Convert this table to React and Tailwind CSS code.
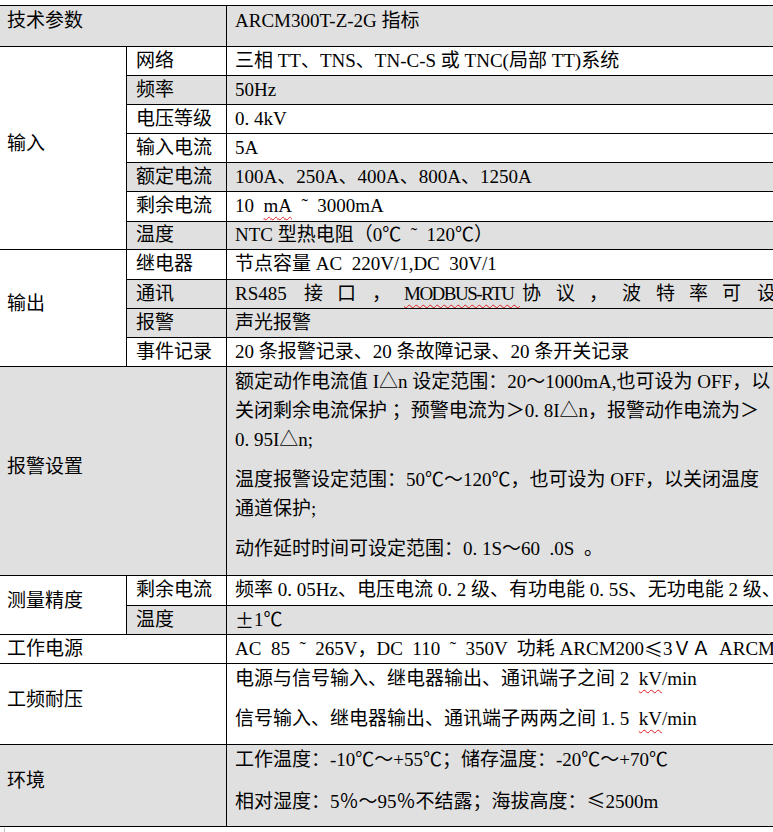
import React from 'react';

const G = 'bg-[#e0e0e0]';

// spell-check squiggle
const W = ({ children, className = '' }) => (
  <span className={`underline decoration-wavy decoration-[#e02020] decoration-1 underline-offset-[4px] ${className}`}>{children}</span>
);

// full-width symbols rendered by the CJK face
const C = ({ children }) => <span className="font-['Noto_Sans_CJK_SC',sans-serif]">{children}</span>;

const Cell = ({ className = '', children }) => (
  <div className={`border-b border-r border-black overflow-hidden whitespace-pre ${className}`}>{children}</div>
);

const Row = ({ r, label, gray, children }) => (
  <>
    <Cell className={`col-start-2 ${r} flex items-center pl-[9px] ${gray ? G : ''}`}>{label}</Cell>
    <Cell className={`col-start-3 ${r} flex items-center pl-[8px] ${gray ? G : ''}`}>{children}</Cell>
  </>
);

const Group = ({ className, children }) => (
  <Cell className={`col-start-1 flex items-center pl-[7px] ${className}`}>
    <span className="mb-[10px] leading-[29px]">{children}</span>
  </Cell>
);

const Para = ({ className = '', children }) => <p className={`leading-[29px] mb-[11px] ${className}`}>{children}</p>;

const comm = [
  ['RS485', 69], ['接', 33], ['口', 35], ['，', 32],
  [<W key="m" className="tracking-[-1.5px]">MODBUS-RTU  </W>, 118],
  ['协', 34], ['议', 33], ['，', 33], ['波', 34], ['特', 33], ['率', 33], ['可', 35], ['设', 40],
];

export default function App() {
  return (
    <div className="w-[773px] h-[832px] overflow-hidden bg-white text-black text-[19px] font-['Liberation_Serif','Noto_Sans_CJK_SC',serif]">
      <div className="mt-[5px] w-[900px] border-t border-black grid grid-cols-[127px_100px_673px] grid-rows-[41px_29px_29px_29px_29px_29px_30px_28px_30px_29px_29px_29px_209px_30px_29px_29px_81px_82px]">
        {/* header */}
        <Cell className={`col-start-1 col-span-2 row-start-1 pl-[7px] leading-[29px] ${G}`}>技术参数</Cell>
        <Cell className={`col-start-3 row-start-1 pl-[8px] leading-[29px] ${G}`}>ARCM300T-Z-2G 指标</Cell>

        {/* 输入 */}
        <Group className="row-start-2 row-span-7">输入</Group>
        <Row r="row-start-2" label="网络">三相 TT、TNS、TN-C-S 或 TNC(局部 TT)系统</Row>
        <Row r="row-start-3" label="频率" gray>50Hz</Row>
        <Row r="row-start-4" label="电压等级">0. 4kV</Row>
        <Row r="row-start-5" label="输入电流">5A</Row>
        <Row r="row-start-6" label="额定电流" gray>100A、250A、400A、800A、1250A</Row>
        <Row r="row-start-7" label="剩余电流">10  <W>mA</W>  ˜  3000mA</Row>
        <Row r="row-start-8" label="温度" gray>NTC 型热电阻（0℃  ˜  120℃）</Row>

        {/* 输出 */}
        <Group className="row-start-9 row-span-4">输出</Group>
        <Row r="row-start-9" label="继电器">节点容量 AC  220V/1,DC  30V/1</Row>
        <Row r="row-start-10" label="通讯" gray>
          {comm.map(([t, w], i) => (
            <span key={i} className="shrink-0" style={{ width: w }}>{t}</span>
          ))}
        </Row>
        <Row r="row-start-11" label="报警" gray>声光报警</Row>
        <Row r="row-start-12" label="事件记录">20 条报警记录、20 条故障记录、20 条开关记录</Row>

        {/* 报警设置 */}
        <Group className={`col-span-2 row-start-13 ${G}`}>报警设置</Group>
        <Cell className={`col-start-3 row-start-13 pl-[8px] ${G}`}>
          <Para>
            额定动作电流值 I△n 设定范围：20～1000mA,也可设为 OFF，以{'\n'}关闭剩余电流保护 ；预警电流为＞0. 8I△n，报警动作电流为＞{'\n'}0. 95I△n;
          </Para>
          <Para>温度报警设定范围：50℃～120℃，也可设为 OFF，以关闭温度{'\n'}通道保护;</Para>
          <Para>动作延时时间可设定范围：0. 1S～60  .0S  。</Para>
        </Cell>

        {/* 测量精度 */}
        <Group className="row-start-14 row-span-2">测量精度</Group>
        <Row r="row-start-14" label="剩余电流">频率 0. 05Hz、电压电流 0. 2 级、有功电能 0. 5S、无功电能 2 级、</Row>
        <Row r="row-start-15" label="温度" gray><C>±</C>1℃</Row>

        {/* 工作电源 */}
        <Cell className="col-start-1 col-span-2 row-start-16 flex items-center pl-[7px]">工作电源</Cell>
        <Cell className="col-start-3 row-start-16 flex items-center pl-[8px]">AC  85  ˜  265V，DC  110  ˜  350V  功耗 ARCM200<C>≤</C>3ＶＡ  ARCM300T 功耗</Cell>

        {/* 工频耐压 */}
        <Group className="col-span-2 row-start-17">工频耐压</Group>
        <Cell className="col-start-3 row-start-17 pl-[8px]">
          <Para>电源与信号输入、继电器输出、通讯端子之间 2  <W>kV</W>/min</Para>
          <Para>信号输入、继电器输出、通讯端子两两之间 1. 5  <W>kV</W>/min</Para>
        </Cell>

        {/* 环境 */}
        <Group className={`col-span-2 row-start-18 ${G}`}>环境</Group>
        <Cell className={`col-start-3 row-start-18 pl-[8px] ${G}`}>
          <Para>工作温度：-10℃～+55℃；储存温度：-20℃～+70℃</Para>
          <Para>相对湿度：5％～95％不结露；海拔高度：<C>≤</C>2500m</Para>
        </Cell>
      </div>
      <div className="ml-[4px] mt-[1px] h-[5px] w-px bg-[#c0c0c0]" />
    </div>
  );
}
